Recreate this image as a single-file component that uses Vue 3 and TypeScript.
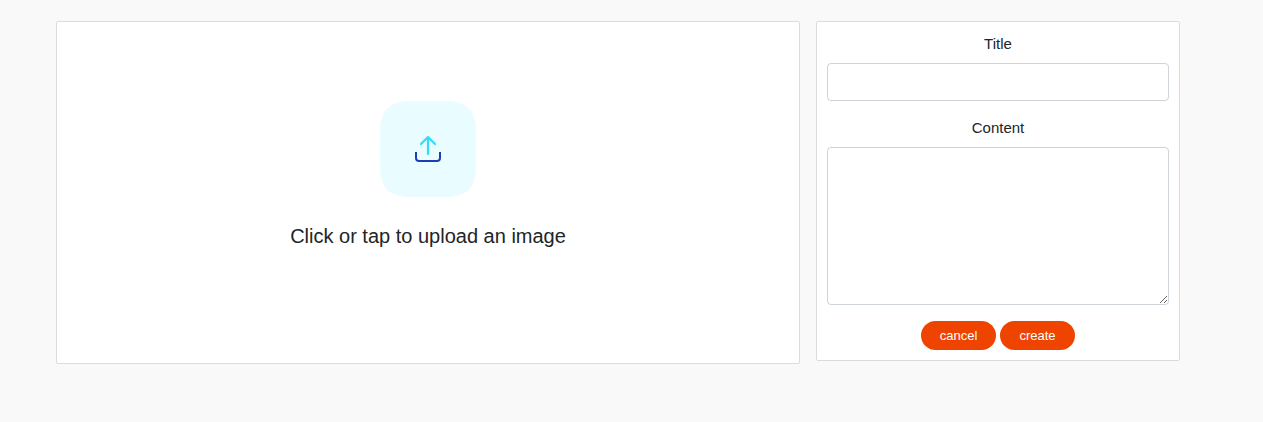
<script setup lang="ts">
import { ref } from 'vue'

const title = ref<string>('')
const content = ref<string>('')

function reset(): void {
  title.value = ''
  content.value = ''
}
</script>

<template>
  <main class="page">
    <label class="card upload" for="image">
      <svg class="tile" viewBox="0 0 96 96" fill="none" aria-hidden="true">
        <path
          d="M0 32C0 9 9 0 32 0H64C87 0 96 9 96 32V64C96 87 87 96 64 96H32C9 96 0 87 0 64Z"
          fill="#e9fcff"
        />
        <path d="M48 53V36M41 43L48 36L55 43" stroke="#2fdcff" stroke-width="2.200" stroke-linejoin="round" stroke-linecap="round" />
        <path d="M36 51V57Q36 60 39 60H57Q60 60 60 57V51" stroke="#1b3fb0" stroke-width="2" />
      </svg>
      <span class="prompt">Click or tap to upload an image</span>
      <input id="image" class="file" type="file" accept="image/*" />
    </label>

    <form class="card form" @submit.prevent>
      <div class="field">
        <label for="title">Title</label>
        <input id="title" v-model="title" class="control" type="text" />
      </div>
      <div class="field">
        <label for="content">Content</label>
        <textarea id="content" v-model="content" class="control area"></textarea>
      </div>
      <div class="actions">
        <button type="button" @click="reset">cancel</button>
        <button type="submit">create</button>
      </div>
    </form>
  </main>
</template>

<style>
body {
  background: #f9f9f9;
}
</style>

<style scoped>
.page {
  display: grid;
  grid-template-columns: 744fr 364fr;
  align-items: start;
  gap: 16px;
  padding: 21px 83px 21px 56px;
  font-family: "Liberation Sans", Arial, sans-serif;
  color: #212529;
}

.card {
  box-sizing: border-box;
  min-width: 0;
  background: #fff;
  border: 1px solid #dadbde;
  border-radius: 2px;
}

.upload {
  display: flex;
  flex-direction: column;
  align-items: center;
  gap: 24px;
  padding: 79px 16px 112px;
  cursor: pointer;
}

.tile {
  width: 96px;
  height: 96px;
}

.prompt {
  font-size: 20px;
  line-height: 30px;
}

.file {
  position: absolute;
  width: 1px;
  height: 1px;
  opacity: 0;
}

.form {
  display: flex;
  flex-direction: column;
  gap: 16px;
  padding: 11px 10px 10px;
}

.field {
  display: flex;
  flex-direction: column;
  gap: 8px;
  font-size: 15px;
  line-height: 22px;
  text-align: center;
}

.control {
  box-sizing: border-box;
  display: block;
  width: 100%;
  height: 38px;
  margin: 0;
  padding: 6px 12px;
  font: inherit;
  color: inherit;
  background: #fff;
  border: 1px solid #ced4da;
  border-radius: 4px;
}

.area {
  height: 158px;
  resize: vertical;
}

.actions {
  display: flex;
  justify-content: center;
  gap: 4px;
}

button {
  width: 75px;
  height: 29px;
  padding: 0;
  font-family: inherit;
  font-size: 13px;
  line-height: 20px;
  color: #fff;
  background: #ee4400;
  border: 0;
  border-radius: 15px;
  cursor: pointer;
}
</style>
